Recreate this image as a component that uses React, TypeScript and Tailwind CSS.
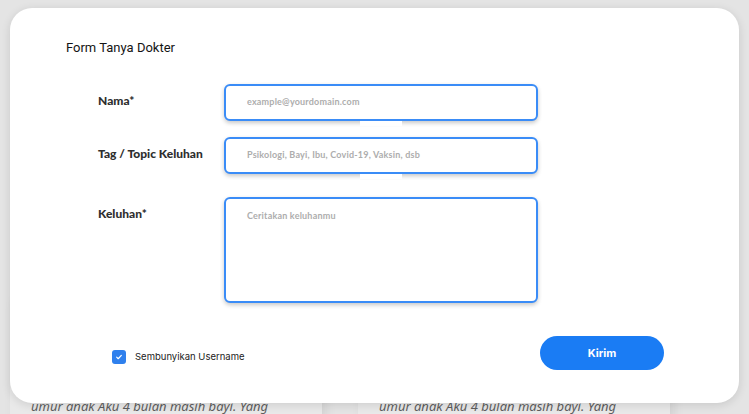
import React from 'react'

const cards = [
  { text: 'umur anak Aku 4 bulan masih bayi. Yang' },
  { text: 'umur anak Aku 4 bulan masih bayi. Yang' },
]

function Field({
  label,
  placeholder,
  multiline,
  gap,
}: {
  label: string
  placeholder: string
  multiline?: boolean
  gap?: boolean
}) {
  return (
    <div className={`flex items-start ${gap ? 'mt-[23px]' : 'mt-[16px]'}`}>
      <label className="w-[158px] shrink-0 whitespace-nowrap pl-[32px] pt-[9px] text-[12px] leading-[16px] font-black text-[#2e2e2e] font-['Lato',sans-serif]">
        {label}
      </label>
      <div className="relative">
        {multiline ? (
          <textarea
            placeholder={placeholder}
            className="block w-[314px] h-[106px] resize-none rounded-[6px] border-2 border-[#3a8cf7] bg-white pl-[21px] pt-[10px] text-[9px] font-bold tracking-[0.2px] outline-none shadow-[0_2px_4px_rgba(0,0,0,0.22)] placeholder:text-[#adadad] font-['Lato',sans-serif]"
          />
        ) : (
          <>
            <input
              placeholder={placeholder}
              className="block w-[314px] h-[37px] rounded-[6px] border-2 border-[#3a8cf7] bg-white pl-[21px] pb-[3px] text-[9px] font-bold tracking-[0.2px] outline-none shadow-[0_2px_4px_rgba(0,0,0,0.22)] placeholder:text-[#adadad] font-['Lato',sans-serif]"
            />
            <div className="absolute left-[136px] top-full h-[5px] w-[42px] bg-white" />
          </>
        )}
      </div>
    </div>
  )
}

export default function App() {
  return (
    <div className="relative w-[749px] h-[414px] overflow-hidden bg-[#e4e4e4]">
      {/* page behind the overlay */}
      <div className="flex gap-[36px] pl-[10px] pt-[300px]">
        {cards.map((c, i) => (
          <div
            key={i}
            className="w-[312px] h-[140px] bg-[#e9e9e9] shadow-[4px_0_10px_rgba(0,0,0,0.08)] pl-[21px] pt-[96px]"
          >
            <p className="text-[13px] italic text-[#5e5e5e] font-['Noto_Sans',sans-serif] leading-[20px]">
              {c.text}
            </p>
          </div>
        ))}
      </div>

      {/* modal */}
      <div className="absolute left-[10px] top-[8px] w-[729px] h-[395px] rounded-[22px] bg-white shadow-[0_2px_10px_rgba(0,0,0,0.12)] pl-[56px] pr-[75px] pt-[32px] flex flex-col">
        <h2 className="text-[13px] leading-[16px] text-[#141414] font-['Roboto',sans-serif]">
          Form Tanya Dokter
        </h2>

        <div className="mt-[12px]">
          <Field label="Nama*" placeholder="example@yourdomain.com" />
          <Field label="Tag / Topic Keluhan" placeholder="Psikologi, Bayi, Ibu, Covid-19, Vaksin, dsb" />
          <Field label="Keluhan*" placeholder="Ceritakan keluhanmu" multiline gap />
        </div>

        <div className="mt-[33px] flex items-center justify-between">
          <label className="flex items-center gap-[9px] pl-[46px] mt-[8px]">
            <span className="flex h-[14px] w-[14px] items-center justify-center rounded-[3px] bg-[#2f80ed]">
              <svg width="8" height="8" viewBox="0 0 12 12" fill="none">
                <path d="M2.5 6.3l2.3 2.3 4.7-5" stroke="white" strokeWidth="1.8" strokeLinecap="round" strokeLinejoin="round" />
              </svg>
            </span>
            <span className="text-[9.5px] text-[#222] font-['Inter',sans-serif]">Sembunyikan Username</span>
          </label>
          <button className="h-[34px] w-[124px] rounded-full bg-[#1a7cf4] text-[11px] font-bold text-white font-['Inter',sans-serif]">
            Kirim
          </button>
        </div>
      </div>
    </div>
  )
}
